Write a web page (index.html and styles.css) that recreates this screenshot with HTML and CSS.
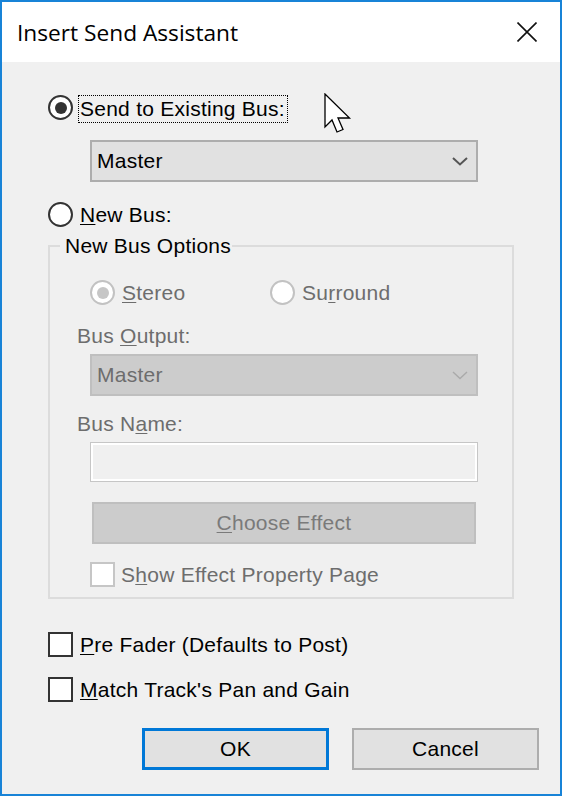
FILE: index.html
```html
<!DOCTYPE html>
<html>
<head>
<meta charset="utf-8">
<link rel="stylesheet" href="styles.css">
</head>
<body>
<div class="window">
  <div class="titlebar">
    <span class="title">Insert Send Assistant</span>
    <svg class="close" width="20" height="20" viewBox="0 0 20 20"><path d="M0.5 0.5 L19.5 19.5 M19.5 0.5 L0.5 19.5" stroke="#111" stroke-width="1.6" fill="none"/></svg>
  </div>
  <div class="content">
    <div class="row first">
      <span class="radio checked"></span>
      <span class="label focus">Send to Existing Bus:</span>
    </div>
    <div class="combo top-combo">
      <span>Master</span>
      <svg class="chev" width="16" height="9" viewBox="0 0 16 9"><polyline points="1,1 8,7.5 15,1" fill="none" stroke="#555" stroke-width="2"/></svg>
    </div>
    <div class="row second">
      <span class="radio"></span>
      <span class="label"><u>N</u>ew Bus:</span>
    </div>
    <fieldset class="group">
      <legend>New Bus Options</legend>
      <div class="group-inner">
        <div class="row opts">
          <div class="opt">
            <span class="radio dis checked"></span>
            <span class="label dis"><u>S</u>tereo</span>
          </div>
          <div class="opt">
            <span class="radio dis"></span>
            <span class="label dis">Su<u>r</u>round</span>
          </div>
        </div>
        <div class="flabel dis out-label">Bus <u>O</u>utput:</div>
        <div class="combo disabled">
          <span>Master</span>
          <svg class="chev" width="16" height="9" viewBox="0 0 16 9"><polyline points="1,1 8,7.5 15,1" fill="none" stroke="#aaa" stroke-width="1.4"/></svg>
        </div>
        <div class="flabel dis name-label">Bus N<u>a</u>me:</div>
        <div class="textbox"></div>
        <div class="btn-dis"><u>C</u>hoose Effect</div>
        <div class="row show-row">
          <span class="check dis"></span>
          <span class="label dis">S<u>h</u>ow Effect Property Page</span>
        </div>
      </div>
    </fieldset>
    <div class="row pre-row">
      <span class="check"></span>
      <span class="label"><u>P</u>re Fader (Defaults to Post)</span>
    </div>
    <div class="row match-row">
      <span class="check"></span>
      <span class="label"><u>M</u>atch Track's Pan and Gain</span>
    </div>
    <div class="buttons">
      <div class="btn ok">OK</div>
      <div class="btn">Cancel</div>
    </div>
  </div>
  <svg class="cursor" width="28" height="42" viewBox="0 0 28 42"><polygon points="1,1 1,34 8,27 13,39 19,36.5 14,25 25.5,25" fill="#fff" stroke="#000" stroke-width="1.3" stroke-linejoin="miter"/></svg>
</div>
</body>
</html>
```

FILE: styles.css
```css
* { box-sizing: border-box; }
html, body { margin: 0; padding: 0; }
body { background: #f0f0f0; }

.window {
  position: relative;
  width: 562px;
  height: 796px;
  border: 2px solid #1883d7;
  background: #f0f0f0;
  font-family: "Liberation Sans", Arial, sans-serif;
  font-size: 21px;
  letter-spacing: 0.25px;
  color: #000;
  overflow: hidden;
}

.titlebar {
  height: 60px;
  background: #fff;
  display: flex;
  align-items: center;
  justify-content: space-between;
  padding-left: 15px;
  padding-right: 23px;
}
.title {
  font-family: "Open Sans", "Noto Sans", sans-serif;
  font-size: 22.7px;
  letter-spacing: 0;
  color: #000;
  margin-top: 0;
}
.close { display: block; }

.content {
  padding: 33px 0 0 46px;
}

.row {
  display: flex;
  align-items: center;
}
.label {
  line-height: 24px;
  white-space: nowrap;
  margin-left: 7px;
}
u { text-decoration: underline; text-underline-offset: 2px; text-decoration-thickness: 1px; }

.first { align-items: flex-start; height: 28px; }
.label.focus {
  margin-left: 5px;
  padding: 1px 2px 1px 1px;
  border: 1px dotted #000;
  line-height: 24px;
}

.radio {
  width: 25px;
  height: 25px;
  flex: none;
  border-radius: 50%;
  border: 2px solid #333;
  background: #fff;
  display: flex;
  align-items: center;
  justify-content: center;
}
.radio.checked::after {
  content: "";
  width: 12px;
  height: 12px;
  border-radius: 50%;
  background: #333;
}
.radio.dis { border-color: #c2c2c2; }
.radio.dis.checked::after { background: #c6c6c6; }

.check {
  width: 25px;
  height: 25px;
  flex: none;
  border: 2px solid #333;
  background: #fff;
}
.check.dis { border-color: #c6c6c6; }

.dis { color: #6d6d6d; }

.combo {
  width: 388px;
  height: 42px;
  border: 2px solid #adadad;
  background: #e1e1e1;
  display: flex;
  align-items: center;
  justify-content: space-between;
  padding: 0 8px 0 5px;
}
.combo.disabled {
  background: #cccccc;
  border-color: #bfbfbf;
  color: #6d6d6d;
  margin-left: 13px;
  margin-top: 6px;
}
.top-combo { margin-left: 42px; margin-top: 17px; }

.second { margin-top: 20px; height: 25px; }

.group {
  margin: 7px 0 0 0;
  padding: 0 0 10px 0;
  width: 466px;
  border: 2px solid #dcdcdc;
  min-width: 0;
}
.group legend {
  margin-left: 10px;
  padding: 0 1px 0 5px;
  line-height: 24px;
}
.group-inner {
  padding-left: 27px;
}
.opts { margin-top: 22px; margin-left: 13px; height: 25px; }
.opt { display: flex; align-items: center; width: 180px; }

.flabel { line-height: 24px; }
.out-label { margin-top: 19px; }
.name-label { margin-top: 16px; }

.textbox {
  margin: 6px 0 0 13px;
  width: 388px;
  height: 40px;
  border: 1px solid #c6c6c6;
  box-shadow: inset 0 0 0 2px #fff;
  background: #f0f0f0;
}

.btn-dis {
  margin: 20px 0 0 15px;
  width: 384px;
  height: 42px;
  border: 2px solid #bfbfbf;
  background: #cccccc;
  color: #7a7a7a;
  display: flex;
  align-items: center;
  justify-content: center;
}

.show-row { margin: 18px 0 0 13px; height: 25px; }
.show-row .label { margin-left: 6px; }

.pre-row { margin-top: 33px; height: 25px; }
.match-row { margin-top: 20px; height: 25px; }

.buttons {
  display: flex;
  gap: 23px;
  margin: 26px 0 0 94px;
}
.btn {
  width: 187px;
  height: 42px;
  border: 2px solid #adadad;
  background: #e1e1e1;
  display: flex;
  align-items: center;
  justify-content: center;
}
.btn.ok { border: 3px solid #0078d7; }

.cursor {
  position: absolute;
  left: 322px;
  top: 91px;
}
```
